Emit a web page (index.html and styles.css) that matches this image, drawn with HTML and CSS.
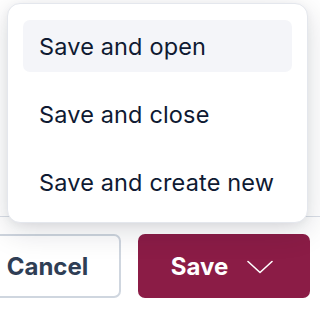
FILE: index.html
```html
<!DOCTYPE html>
<html>
<head>
<meta charset="utf-8">
<link rel="stylesheet" href="styles.css">
</head>
<body>
<div class="page">
  <div class="footer">
    <button class="btn btn-cancel">Cancel</button>
    <button class="btn btn-save">
      <span>Save</span>
      <svg class="chev" width="26" height="14" viewBox="0 0 26 14" fill="none">
        <path d="M1 1.5 L13 12.5 L25 1.5" stroke="#ffffff" stroke-width="1.6" stroke-linecap="round" stroke-linejoin="round"/>
      </svg>
    </button>
  </div>
  <div class="menu">
    <div class="item active">Save and open</div>
    <div class="item">Save and close</div>
    <div class="item">Save and create new</div>
  </div>
</div>
</body>
</html>
```
FILE: styles.css
```css
html, body {
  margin: 0;
  padding: 0;
  background: #ffffff;
}
body {
  font-family: Inter, "Noto Sans", sans-serif;
  width: 320px;
  height: 310px;
  overflow: hidden;
}
.page {
  position: relative;
  width: 320px;
  height: 310px;
  overflow: hidden;
}
.footer {
  margin-top: 216px;
  border-top: 1px solid #d9dee6;
  padding-top: 17px;
  padding-right: 10px;
  display: flex;
  justify-content: flex-end;
  gap: 17px;
}
.btn {
  box-sizing: border-box;
  height: 64px;
  border-radius: 7px;
  font-family: Inter, "Noto Sans", sans-serif;
  font-weight: 700;
  font-size: 24px;
  display: flex;
  align-items: center;
  justify-content: center;
  flex-shrink: 0;
  padding: 0;
  cursor: pointer;
}
.btn-cancel {
  width: 147px;
  background: #ffffff;
  border: 2px solid #cfd6df;
  color: #2f3e55;
}
.btn-save {
  width: 172px;
  background: #8b1c46;
  border: none;
  color: #ffffff;
  gap: 19px;
  padding-right: 4px;
}
.chev {
  display: block;
  margin-top: 1px;
}
.menu {
  position: absolute;
  left: 7px;
  top: 3px;
  width: 301px;
  box-sizing: border-box;
  background: #ffffff;
  border: 1px solid #e4e7ed;
  border-radius: 13px;
  padding: 16px 15px 14px 15px;
  display: flex;
  flex-direction: column;
  gap: 16px;
  box-shadow: 0 8px 30px rgba(15, 23, 42, 0.15), 0 2px 8px rgba(15, 23, 42, 0.05);
}
.item {
  height: 52px;
  border-radius: 7px;
  padding-left: 16px;
  display: flex;
  align-items: center;
  font-size: 23.5px;
  font-weight: 400;
  color: #0f1a32;
  letter-spacing: 0.15px;
}
.item.active {
  background: #f4f5f9;
}
```
